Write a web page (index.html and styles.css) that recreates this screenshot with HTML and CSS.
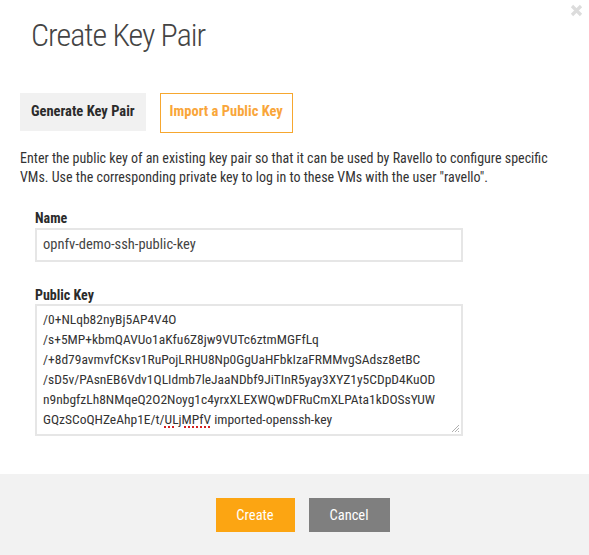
FILE: index.html
```html
<!DOCTYPE html>
<html>
<head>
<meta charset="utf-8">
<link rel="stylesheet" href="styles.css">
</head>
<body>
<div class="modal">
  <button class="close" aria-label="Close">
    <svg width="13" height="13" viewBox="0 0 13 13"><path d="M2 2L11 11M11 2L2 11" stroke="#dcdcdc" stroke-width="3.2" stroke-linecap="butt"/></svg>
  </button>
  <h1 class="title">Create Key Pair</h1>
  <div class="tabs">
    <div class="tab">Generate Key Pair</div>
    <div class="tab active">Import a Public Key</div>
  </div>
  <p class="desc">Enter the public key of an existing key pair so that it can be used by Ravello to configure specific VMs. Use the corresponding private key to log in to these VMs with the user "ravello".</p>
  <div class="form">
    <label class="label">Name</label>
    <div class="input">opnfv-demo-ssh-public-key</div>
    <label class="label second">Public Key</label>
    <div class="textarea">
      <div>/0+NLqb82nyBj5AP4V4O</div>
      <div>/s+5MP+kbmQAVUo1aKfu6Z8jw9VUTc6ztmMGFfLq</div>
      <div>/+8d79avmvfCKsv1RuPojLRHU8Np0GgUaHFbkIzaFRMMvgSAdsz8etBC</div>
      <div>/sD5v/PAsnEB6Vdv1QLIdmb7leJaaNDbf9JiTInR5yay3XYZ1y5CDpD4KuOD</div>
      <div>n9nbgfzLh8NMqeQ2O2Noyg1c4yrxXLEXWQwDFRuCmXLPAta1kDOSsYUW</div>
      <div>GQzSCoQHZeAhp1E/t/<span class="spell">ULjMPfV</span> imported-openssh-key</div>
      <svg class="grip" width="10" height="10" viewBox="0 0 10 10"><path d="M9 2L2 9M9 5L5 9M9 8L8 9" stroke="#b0b0b0" stroke-width="1"/></svg>
    </div>
  </div>
  <div class="footer">
    <button class="btn create">Create</button>
    <button class="btn cancel">Cancel</button>
  </div>
</div>
</body>
</html>
```
FILE: styles.css
```css
html, body {
  margin: 0;
  padding: 0;
  background: #fff;
}
body {
  font-family: "Liberation Sans Narrow", "Roboto Condensed", "DejaVu Sans Condensed", "Liberation Sans", sans-serif;
  color: #333;
}
.modal {
  position: relative;
  width: 589px;
  height: 555px;
  display: flex;
  flex-direction: column;
}
.close {
  position: absolute;
  top: 4px;
  right: 6px;
  border: 0;
  background: none;
  padding: 0;
  width: 13px;
  height: 13px;
}
.title {
  margin: 15px 0 0 31px;
  font-size: 32px;
  font-weight: 300;
  color: #444;
  line-height: 40px;
  letter-spacing: -1px;
}
.tabs {
  display: flex;
  gap: 14px;
  margin: 38px 0 0 20px;
}
.tab {
  height: 38px;
  line-height: 38px;
  padding: 0 11px;
  background: #f1f1f1;
  font-weight: bold;
  font-size: 14.5px;
  color: #2b2b2b;
}
.tab.active {
  background: #fff;
  border: 1px solid #f6a72f;
  line-height: 36px;
  color: #f9a63a;
  padding: 0 9px;
}
.desc {
  margin: 16px 20px 0 20px;
  font-size: 14px;
  line-height: 19px;
  color: #333;
}
.form {
  display: flex;
  flex-direction: column;
  margin: 22px 0 0 35px;
  width: 428px;
}
.label {
  font-weight: bold;
  font-size: 14px;
  line-height: 18px;
  color: #2b2b2b;
}
.label.second {
  margin-top: 24px;
}
.input {
  margin-top: 1px;
  height: 30px;
  border: 2px solid #e6e6e6;
  padding: 0 6px;
  font-size: 14.5px;
  line-height: 30px;
  color: #444;
}
.textarea {
  position: relative;
  margin-top: 0;
  border: 2px solid #e6e6e6;
  padding: 3px 6px;
  box-sizing: border-box;
  font-size: 13.5px;
  line-height: 20px;
  color: #333;
  height: 132px;
}
.spell {
  text-decoration: underline dotted #d42020;
  text-decoration-thickness: 2px;
  text-underline-offset: 2px;
}
.grip {
  position: absolute;
  right: 1px;
  bottom: 1px;
}
.footer {
  margin-top: auto;
  height: 81px;
  background: #f2f2f2;
  display: flex;
  justify-content: center;
  align-items: flex-start;
  gap: 14px;
  padding-top: 24px;
  box-sizing: border-box;
  padding-left: 16px;
}
.btn {
  height: 34px;
  border: 0;
  font-family: inherit;
  font-size: 14.5px;
  color: #fff;
  padding: 0;
}
.create {
  width: 79px;
  background: #fca512;
}
.cancel {
  width: 81px;
  background: #7f7f7f;
}
```
